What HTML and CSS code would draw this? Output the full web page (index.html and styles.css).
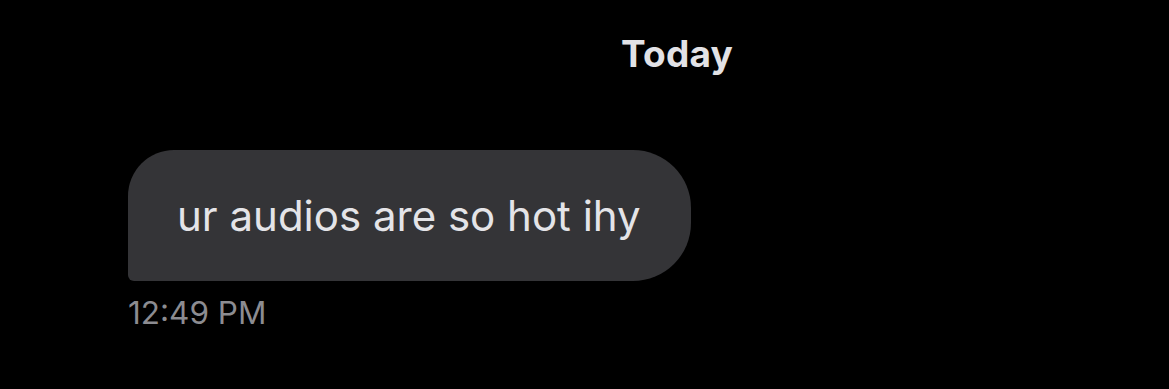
FILE: index.html
```html
<!DOCTYPE html>
<html lang="en">
<head>
    <meta charset="UTF-8">
    <meta name="viewport" content="width=device-width, initial-scale=1.0">
    <title>Messages</title>
    <link rel="stylesheet" href="styles.css">
</head>
<body>
    <div class="thread">
        <div class="day-label">Today</div>

        <!-- received message -->
        <div class="message received">
            <div class="bubble">ur audios are so hot ihy</div>
            <div class="time">12:49 PM</div>
        </div>
    </div>
</body>
</html>
```

FILE: styles.css
```css
* {
    margin: 0;
    padding: 0;
    box-sizing: border-box;
    font-family: 'Inter', 'Liberation Sans', sans-serif;
}

body {
    background: #000;
    width: 1169px;
    height: 389px;
    overflow: hidden;
}

.thread {
    display: flex;
    flex-direction: column;
    padding: 32px 0 0 128px;
}

.day-label {
    margin-left: 493px;
    color: #e2e2e6;
    font-size: 37px;
    font-weight: 700;
    line-height: 44px;
    letter-spacing: 0.2px;
}

.message {
    display: flex;
    flex-direction: column;
    align-items: flex-start;
    margin-top: 74px;
}

.bubble {
    background: #343437;
    color: #e4e4e8;
    font-size: 42px;
    line-height: 131px;
    height: 131px;
    padding: 0 50px 0 49px;
    border-radius: 46px 58px 58px 6px;
}

.time {
    margin-top: 12px;
    color: #8c8c91;
    font-size: 31.5px;
    line-height: 40px;
}
```
